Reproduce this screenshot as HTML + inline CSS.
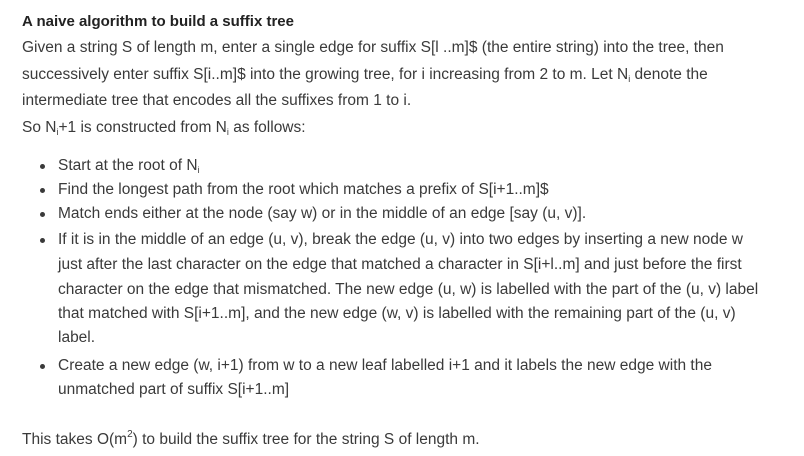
<!DOCTYPE html>
<html><head><style>
body{margin:0;width:804px;height:456px;background:#fff;font-family:"Liberation Sans",Arial,sans-serif;color:#3a3a3a;font-size:15.5px;position:relative;overflow:hidden}
.l{position:absolute;white-space:nowrap;left:22px;line-height:20px}
.b{left:58px}
.d{position:absolute;left:40px;width:5px;height:5px;border-radius:50%;background:#3a3a3a}
sub{font-size:9px;vertical-align:-3px;line-height:0}
sup{font-size:10px;vertical-align:7px;line-height:0}
</style></head><body>
<div class="l" style="top:12px;font-weight:bold;color:#222;font-size:15px">A naive algorithm to build a suffix tree</div>
<div class="l" style="top:38px">Given a string S of length m, enter a single edge for suffix S[l ..m]$ (the entire string) into the tree, then</div>
<div class="l" style="top:65px">successively enter suffix S[i..m]$ into the growing tree, for i increasing from 2 to m. Let N<sub>i</sub> denote the</div>
<div class="l" style="top:91px">intermediate tree that encodes all the suffixes from 1 to i.</div>
<div class="l" style="top:118px">So N<sub>i</sub>+1 is constructed from N<sub>i</sub> as follows:</div>
<div class="d" style="top:164px"></div><div class="l b" style="top:156px">Start at the root of N<sub>i</sub></div>
<div class="d" style="top:188px"></div><div class="l b" style="top:180px">Find the longest path from the root which matches a prefix of S[i+1..m]$</div>
<div class="d" style="top:212px"></div><div class="l b" style="top:204px">Match ends either at the node (say w) or in the middle of an edge [say (u, v)].</div>
<div class="d" style="top:238px"></div><div class="l b" style="top:230px">If it is in the middle of an edge (u, v), break the edge (u, v) into two edges by inserting a new node w</div>
<div class="l b" style="top:255px">just after the last character on the edge that matched a character in S[i+l..m] and just before the first</div>
<div class="l b" style="top:280px">character on the edge that mismatched. The new edge (u, w) is labelled with the part of the (u, v) label</div>
<div class="l b" style="top:304px">that matched with S[i+1..m], and the new edge (w, v) is labelled with the remaining part of the (u, v)</div>
<div class="l b" style="top:328px">label.</div>
<div class="d" style="top:364px"></div><div class="l b" style="top:356px">Create a new edge (w, i+1) from w to a new leaf labelled i+1 and it labels the new edge with the</div>
<div class="l b" style="top:380px">unmatched part of suffix S[i+1..m]</div>
<div class="l" style="top:430px">This takes O(m<sup>2</sup>) to build the suffix tree for the string S of length m.</div>
</body></html>
